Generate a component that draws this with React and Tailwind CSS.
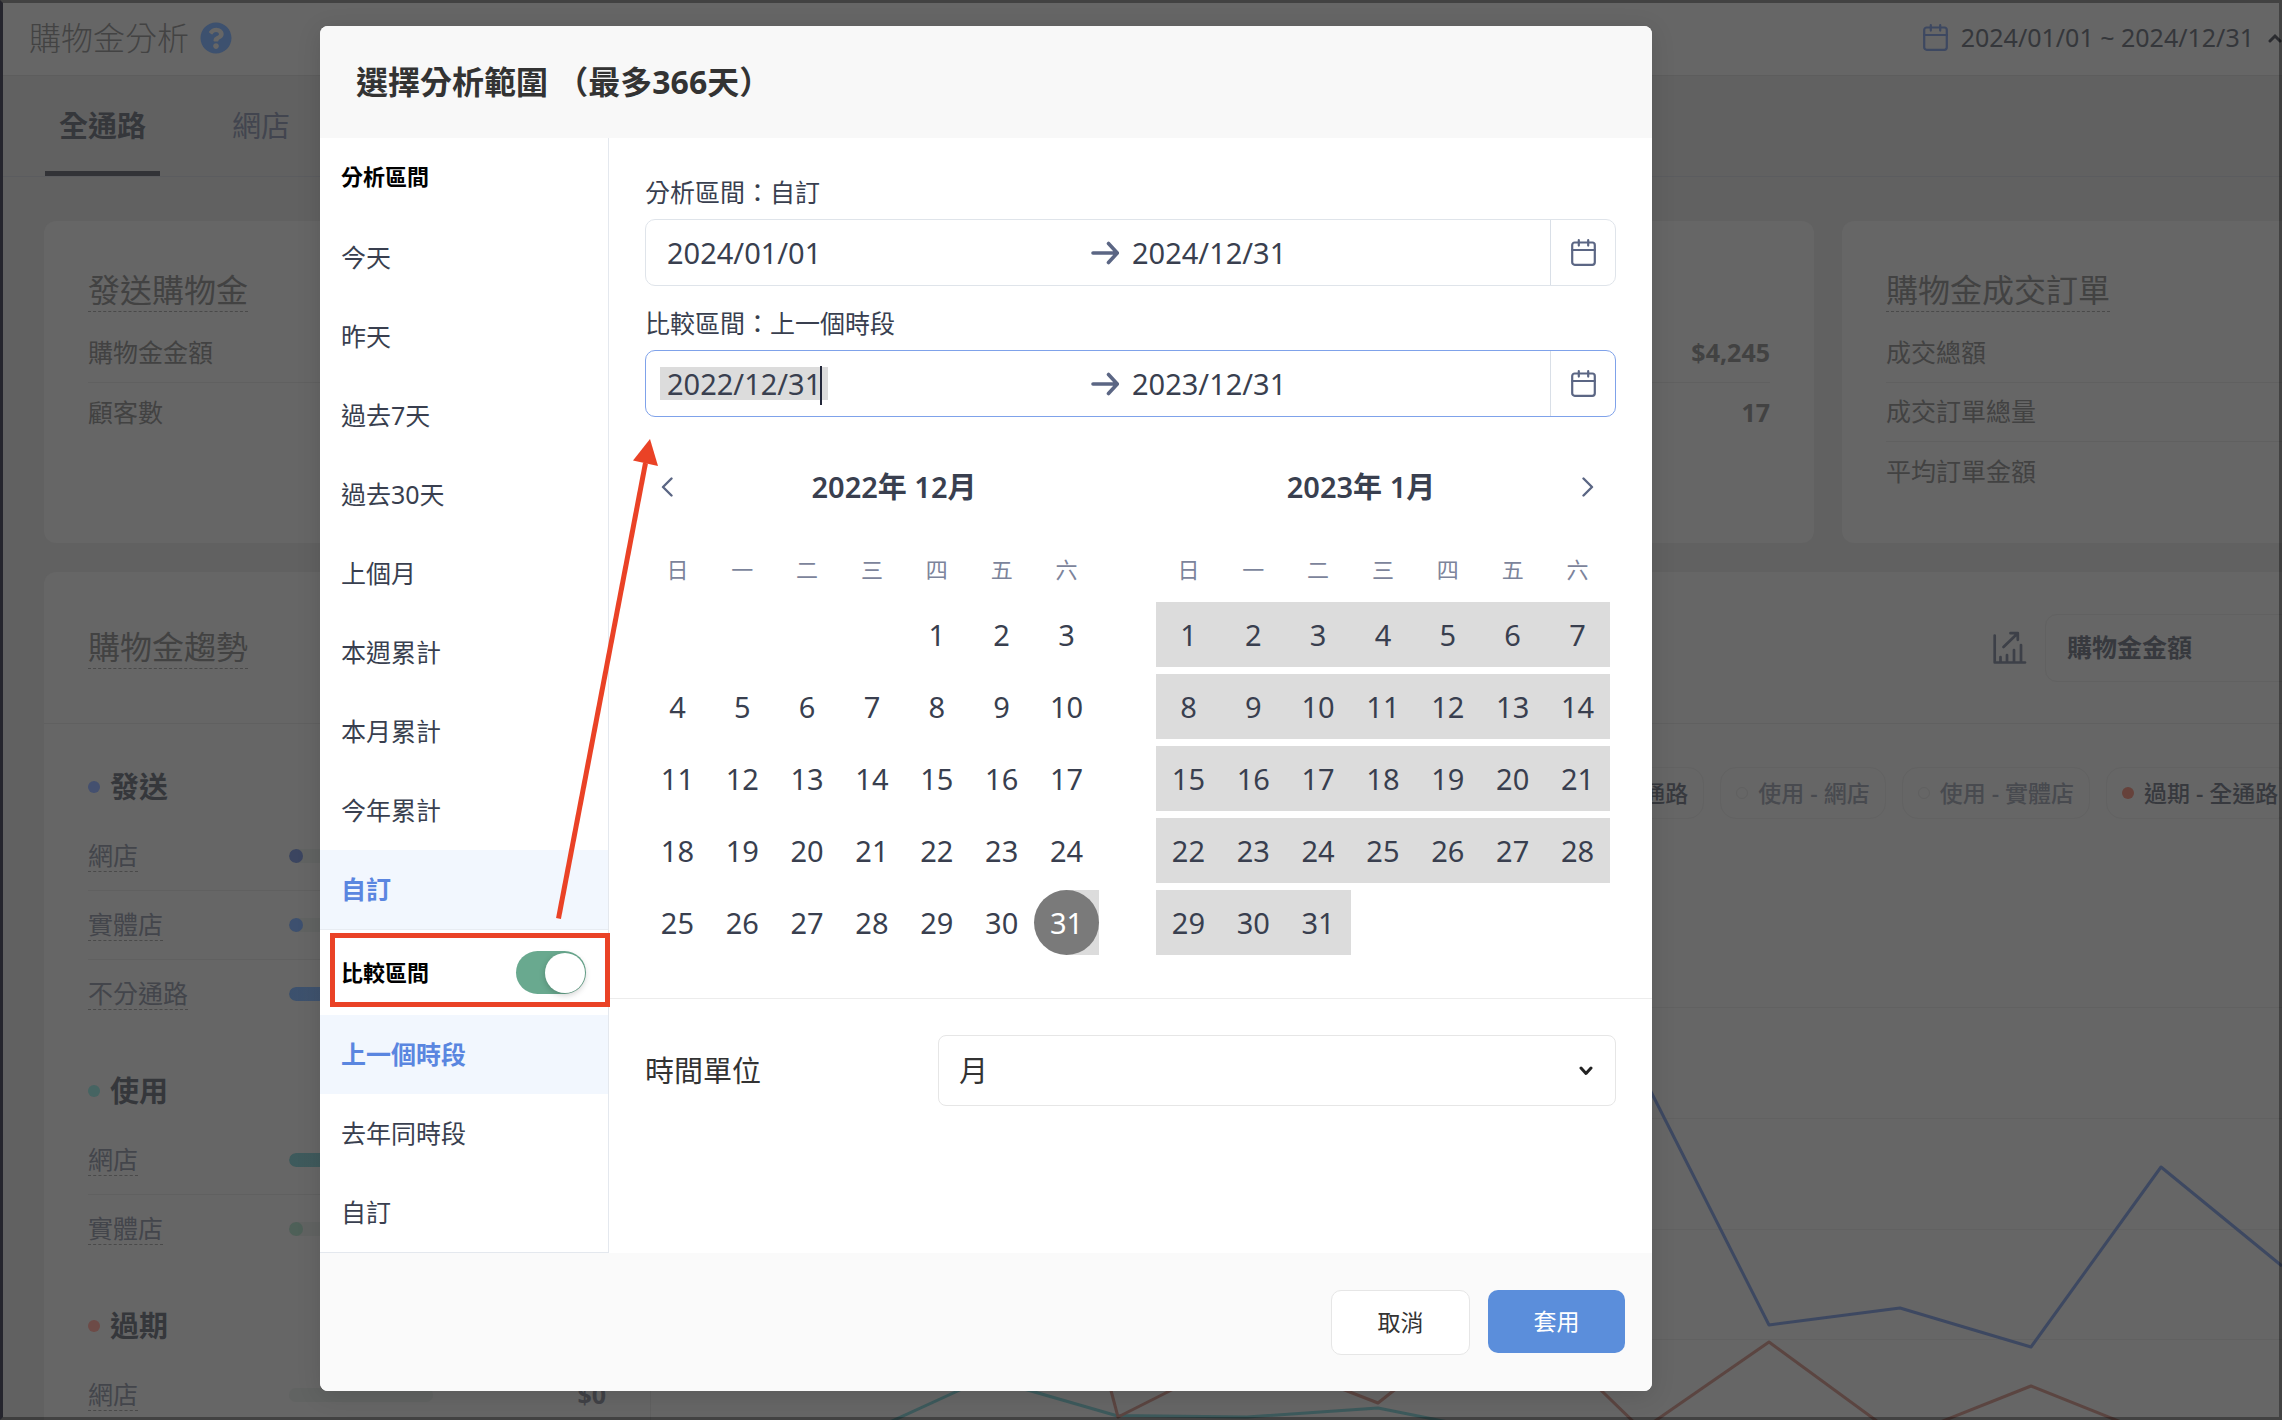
import React, { useState } from "react";
import { FaQuestionCircle } from "react-icons/fa";

const WEEKDAYS = ["日", "一", "二", "三", "四", "五", "六"];

function CalendarIcon({ className }) {
  return (
    <svg viewBox="0 0 25 27" fill="none" stroke="currentColor" strokeWidth="2.2" strokeLinecap="round" strokeLinejoin="round" className={className} aria-hidden="true">
      <rect x="1.200" y="3.500" width="22.600" height="22.300" rx="2.500" />
      <path d="M1.200 11h22.600M7.800 1.200v5.400M17.200 1.200v5.400" />
    </svg>
  );
}

function ArrowRight() {
  return (
    <svg viewBox="0 0 28 24" fill="none" stroke="#5b6684" strokeWidth="3.6" strokeLinecap="round" strokeLinejoin="round" className="h-6 w-7 shrink-0" aria-hidden="true">
      <path d="M2 12h24M17.5 2.5L26.3 12L17.5 21.5" />
    </svg>
  );
}

function TrendIcon() {
  return (
    <svg viewBox="0 0 34 34" fill="none" stroke="#3d4048" strokeWidth="2.7" strokeLinecap="round" strokeLinejoin="round" className="size-[34px] shrink-0" aria-hidden="true">
      <path d="M1.700 4.500V31.500H32M7.500 30.500V26M14 30.500V24M21 30.500V19M28 30.500V14" />
      <path d="M10.500 16L24.500 2.500M17.500 2.200H24.800V8.800" />
    </svg>
  );
}

/* ---------- dashboard behind the dialog ---------- */

function StatCard({ title, rows }) {
  return (
    <section className="flex w-[871px] shrink-0 flex-col rounded-xl bg-[#666] px-11 pt-12 pb-[42px]">
      <h2 className="self-start border-b border-dashed border-[#4a4a4a] text-[32px] leading-[42px] text-[#424242]">{title}</h2>
      <dl className="mt-3">
        {rows.map(([label, value], i) => (
          <div key={label} className={"flex h-[59px] items-center justify-between text-[25px] text-[#424242] " + (i < rows.length - 1 ? "border-b border-[#606060]" : "")}>
            <dt>{label}</dt>
            <dd className="font-bold">{value}</dd>
          </div>
        ))}
      </dl>
    </section>
  );
}

function Group({ name, dot, rows }) {
  return (
    <section>
      <h3 className="flex h-[98px] items-center gap-[10px] pt-7 text-[29px] font-bold text-[#35373b]">
        <span className={"size-3 rounded-full " + dot} />
        {name}
      </h3>
      <ul>
        {rows.map((r, i) => (
          <li key={r.name} className={"flex items-center text-[25px] " + (i < rows.length - 1 ? "h-[69px] border-b border-[#606060]" : "h-[68px]")}>
            <span className="w-[201px]">
              <span className="inline-block border-b border-dashed border-[#4a4a4a] leading-[32px] text-[#43454b]">{r.name}</span>
            </span>
            <span className="flex h-[14px] w-[144px] overflow-hidden rounded-full bg-[#616362]">
              <span className={"rounded-full " + r.bar} />
            </span>
            <span className="ml-auto font-bold text-[#414247]">{r.value}</span>
          </li>
        ))}
      </ul>
    </section>
  );
}

function Pill({ label, dot, muted }) {
  return (
    <span className={"flex h-[52px] shrink-0 items-center gap-[10px] rounded-2xl border border-[#626262] px-[15px] text-[23px] font-medium " + (muted ? "text-[#484a4f]" : "text-[#37393e]")}>
      <span className={"size-3 rounded-full " + dot} />
      {label}
    </span>
  );
}

function Chart() {
  return (
    <svg viewBox="651 819 1631 601" className="block h-[601px] w-[1631px] shrink-0" fill="none" strokeWidth="3" strokeLinejoin="round" aria-hidden="true">
      <g stroke="#616161" strokeWidth="1">
        <path d="M695 1007.500H2282M695 1118.500H2282M695 1229.500H2282M695 1339.500H2282" />
      </g>
      <polyline stroke="#3d5a5c" points="855,1438 986,1378 1116,1415.500 1247,1417 1378,1408 1508,1434" />
      <polyline stroke="#5b4541" points="1095,1330 1118,1417 1247,1352 1378,1403 1508,1300 1642,1430 1769,1342 1900,1438 2031,1386 2161,1438" />
      <polyline stroke="#3d4861" points="1639,1068 1769,1325 1900,1308 2031,1347 2161,1167 2282,1266" />
    </svg>
  );
}

function Dashboard() {
  return (
    <div className="flex h-full flex-col bg-[#616161]">
      <header className="flex h-[76px] shrink-0 items-center border-b border-[#5d5d5d] bg-[#666] pl-[29px]">
        <h1 className="text-[32px] font-light text-[#434343]">購物金分析</h1>
        <FaQuestionCircle className="ml-[11px] size-8 text-[#3d516f]" />
        <button type="button" className="ml-auto flex shrink-0 items-center text-[25px] text-[#35373b]">
          <CalendarIcon className="mr-[13px] h-[27px] w-[25px] text-[#3d4861]" />
          2024/01/01 ~ 2024/12/31
          <svg viewBox="0 0 14 10" className="ml-[14px] h-[10px] w-[14px]" fill="none" stroke="#2b2c30" strokeWidth="3" strokeLinecap="round" aria-hidden="true">
            <path d="M2 8L7 3L12 8" />
          </svg>
        </button>
      </header>
      <nav className="flex h-[101px] shrink-0 gap-[58px] border-b border-[#5b5c5f] pl-[45px] text-[29px]">
        <a href="#all" className="flex items-center border-b-[5px] border-[#323337] px-[14px] pt-[5px] font-bold text-[#35373b]">全通路</a>
        <a href="#shop" className="flex items-center border-b-[5px] border-transparent px-[14px] pt-[5px] text-[#42454f]">網店</a>
      </nav>
      <main className="flex min-h-0 flex-1 flex-col gap-[29px] overflow-hidden pt-11 pl-11">
        <div className="flex gap-7">
          <StatCard title="發送購物金" rows={[["購物金金額", ""], ["顧客數", ""]]} />
          <StatCard title="使用購物金" rows={[["購物金金額", "$4,245"], ["顧客數", "17"]]} />
          <StatCard title="購物金成交訂單" rows={[["成交總額", ""], ["成交訂單總量", ""], ["平均訂單金額", ""]]} />
        </div>
        <section className="flex w-[2668px] flex-1 flex-col rounded-tl-xl bg-[#666]">
          <div className="flex h-[152px] shrink-0 items-center border-b border-[#606060] pl-11">
            <h2 className="border-b border-dashed border-[#4a4a4a] text-[32px] leading-[42px] text-[#424242]">購物金趨勢</h2>
            <div className="ml-[1745px] flex items-center gap-[18px]">
              <TrendIcon />
              <button type="button" className="h-[68px] w-[300px] rounded-xl border border-[#616161] pl-[21px] text-left text-[25px] font-bold text-[#37393e]">購物金金額</button>
            </div>
          </div>
          <div className="flex">
            <div className="w-[607px] shrink-0 border-r border-[#606060] px-11">
              <Group
                name="發送"
                dot="bg-[#44506f]"
                rows={[
                  { name: "網店", bar: "w-[14px] bg-[#3b4560]" },
                  { name: "實體店", bar: "w-[14px] bg-[#3d506f]" },
                  { name: "不分通路", bar: "w-[120px] bg-linear-to-r from-[#3b506d] to-[#4c5a6e]" },
                ]}
              />
              <Group
                name="使用"
                dot="bg-[#466462]"
                rows={[
                  { name: "網店", bar: "w-[120px] bg-linear-to-r from-[#3d5a5c] to-[#46585b]" },
                  { name: "實體店", bar: "w-[14px] bg-[#4e6058]" },
                ]}
              />
              <Group name="過期" dot="bg-[#6d4b47]" rows={[{ name: "網店", bar: "w-0", value: "$0" }]} />
            </div>
            <div className="min-w-0 flex-1">
              <div className="flex gap-4 pt-[43px] pl-[865px]">
                <Pill label="使用 - 全通路" dot="bg-[#466462]" />
                <Pill label="使用 - 網店" dot="border border-[#606060]" muted />
                <Pill label="使用 - 實體店" dot="border border-[#606060]" muted />
                <Pill label="過期 - 全通路" dot="bg-[#66423b]" />
              </div>
              <Chart />
            </div>
          </div>
        </section>
      </main>
    </div>
  );
}

/* ---------- dialog ---------- */

function NavItem({ label, selected, onClick }) {
  return (
    <button
      type="button"
      aria-pressed={selected}
      onClick={onClick}
      className={"block h-[79px] w-full px-[21px] pt-px text-left text-[25px] " + (selected ? "bg-[#f2f7fe] font-bold text-[#5a86e0]" : "text-[#393f4f]")}
    >
      {label}
    </button>
  );
}

function RangeField({ id, label, start, end, active }) {
  return (
    <div>
      <label htmlFor={id} className="block text-[25px] leading-[36px] text-[#393f4f]">{label}</label>
      <div className={"mt-[9px] flex h-[67px] items-center rounded-[10px] border " + (active ? "border-[#7fa2ea]" : "border-[#dfe4ea]")}>
        <div className="relative flex-1 pl-[14px]">
          <input id={id} defaultValue={start} className={"block h-[33px] w-[168px] px-[7px] text-[29px] leading-[33px] text-[#393f4f] outline-none " + (active ? "bg-[#dcdcdc]" : "")} />
          {active && <span className="absolute -top-px left-[174px] h-[39px] w-[2px] bg-[#23283a]" />}
        </div>
        <ArrowRight />
        <div className="flex-1">
          <input aria-label={label} defaultValue={end} className="block h-[33px] w-full px-[13px] text-[29px] leading-[33px] text-[#393f4f] outline-none" />
        </div>
        <button type="button" aria-label="開啟日曆" className="flex h-full w-[65px] items-center justify-center border-l border-[#d9dfe7] text-[#5b6684]">
          <CalendarIcon className="h-[27px] w-[25px]" />
        </button>
      </div>
    </div>
  );
}

function Month({ title, offset, range, selected, side }) {
  const nav = (
    <button type="button" aria-label={side === "left" ? "上個月份" : "下個月份"} className="flex h-11 w-11 shrink-0 items-center justify-center">
      <svg viewBox="0 0 12 20" className="h-5 w-3" fill="none" stroke="#5b6684" strokeWidth="2.4" strokeLinecap="round" strokeLinejoin="round" aria-hidden="true">
        <path d={side === "left" ? "M10.500 1.500L2 10L10.500 18.500" : "M1.500 1.500L10 10L1.500 18.500"} />
      </svg>
    </button>
  );
  const cells = [...Array(offset).fill(null), ...Array.from({ length: 31 }, (_, i) => i + 1)];
  while (cells.length % 7) cells.push(null);
  const weeks = [];
  for (let i = 0; i < cells.length; i += 7) weeks.push(cells.slice(i, i + 7));
  return (
    <div className="min-w-0 flex-1">
      <div className="flex items-center">
        {side === "left" && nav}
        <h3 className="flex-1 text-center text-[29px] leading-[44px] font-semibold text-[#393f4f]">{title}</h3>
        {side === "right" && nav}
      </div>
      <table className="mt-[38px] w-full table-fixed border-collapse">
        <thead>
          <tr>
            {WEEKDAYS.map((d) => (
              <th key={d} className="h-[48px] pb-1 text-[22px] leading-[44px] font-normal text-[#7c849b]">{d}</th>
            ))}
          </tr>
        </thead>
        <tbody>
          {weeks.map((w, wi) => (
            <tr key={wi}>
              {w.map((d, di) => (
                <td key={di} className="h-[72px] p-0 align-bottom">
                  {d && (
                    <button
                      type="button"
                      className={
                        "block h-[65px] w-full text-center text-[29px] " +
                        (d === selected
                          ? "bg-linear-to-r from-transparent from-50% to-[#dcdcdc] to-50% text-white"
                          : range
                            ? "bg-[#dcdcdc] text-[#393f4f]"
                            : "text-[#393f4f]")
                      }
                    >
                      {d === selected ? <span className="block h-full rounded-full bg-[#7a7a7a] leading-[66px]">{d}</span> : d}
                    </button>
                  )}
                </td>
              ))}
            </tr>
          ))}
        </tbody>
      </table>
    </div>
  );
}

function RangeDialog() {
  const [range, setRange] = useState(8);
  const [compare, setCompare] = useState(0);
  const [on, setOn] = useState(true);
  const ranges = ["今天", "昨天", "過去7天", "過去30天", "上個月", "本週累計", "本月累計", "今年累計", "自訂"];
  const compares = ["上一個時段", "去年同時段", "自訂"];
  return (
    <div role="dialog" aria-labelledby="range-title" className="relative w-[1332px] overflow-hidden rounded-lg bg-white shadow-[0_4px_24px_rgba(0,0,0,0.12)]">
      <header className="flex h-28 items-center bg-[#f8f8f8] px-9">
        <h2 id="range-title" className="text-[32px] font-bold text-[#333]">選擇分析範圍 （最多366天）</h2>
      </header>
      <div className="flex">
        <aside className="w-[289px] shrink-0 border-r border-b border-[#e4e8ee]">
          <h3 className="flex h-20 items-center px-[21px] pb-[3px] text-[22px] font-bold text-black">分析區間</h3>
          {ranges.map((r, i) => (
            <NavItem key={r} label={r} selected={i === range} onClick={() => setRange(i)} />
          ))}
          <div className="flex h-[86px] items-center justify-between border-t border-[#e8ecf2] pr-[22px] pl-[21px]">
            <label htmlFor="compare-switch" className="text-[22px] font-bold text-black">比較區間</label>
            <input
              id="compare-switch"
              type="checkbox"
              role="switch"
              checked={on}
              onChange={(e) => setOn(e.target.checked)}
              className="flex h-[43px] w-[70px] appearance-none items-center rounded-full bg-[#b9bec8] p-px before:size-10 before:rounded-full before:bg-white before:shadow-[0_2px_6px_rgba(0,0,0,0.2)] checked:justify-end checked:bg-[#69a98f]"
            />
          </div>
          {compares.map((r, i) => (
            <NavItem key={r} label={r} selected={i === compare} onClick={() => setCompare(i)} />
          ))}
        </aside>
        <div className="min-w-0 flex-1">
          <div className="border-b border-[#ececec] px-9 pt-9 pb-[43px]">
            <RangeField id="range-start" label="分析區間：自訂" start="2024/01/01" end="2024/12/31" />
            <div className="mt-[19px]">
              <RangeField id="compare-start" label="比較區間：上一個時段" start="2022/12/31" end="2023/12/31" active />
            </div>
            <div className="mt-12 flex gap-[57px] pr-[6px]">
              <Month title="2022年 12月" offset={4} selected={31} side="left" />
              <Month title="2023年 1月" offset={0} range side="right" />
            </div>
          </div>
          <div className="flex items-center px-9 pt-9">
            <label htmlFor="unit" className="w-[293px] text-[29px] text-[#333]">時間單位</label>
            <div className="relative flex-1">
              <select id="unit" className="block h-[71px] w-full appearance-none rounded-lg border border-[#e6e6e6] bg-white px-5 text-[29px] text-[#333]">
                <option>月</option>
              </select>
              <svg viewBox="0 0 14 10" className="pointer-events-none absolute top-[31px] right-[23px] h-[10px] w-[14px]" fill="none" stroke="#222" strokeWidth="3" strokeLinecap="round" strokeLinejoin="round" aria-hidden="true">
                <path d="M2 2L7 7.500L12 2" />
              </svg>
            </div>
          </div>
        </div>
      </div>
      <footer className="flex h-[138px] items-start justify-end gap-[18px] bg-[#fafafa] pt-[37px] pr-[27px] text-[23px]">
        <button type="button" className="h-[65px] w-[139px] rounded-[10px] border border-[#e6e6e6] bg-white text-[#333]">取消</button>
        <button type="button" className="h-[63px] w-[137px] rounded-[10px] bg-[#5b8edb] text-white">套用</button>
      </footer>

      {/* annotation: frame round the switch, arrow to the compare field */}
      <svg viewBox="0 0 360 1000" className="pointer-events-none absolute top-0 left-0 h-[1000px] w-[360px]" aria-hidden="true">
        <rect x="12.500" y="909.500" width="275" height="69" fill="none" stroke="#ea4226" strokeWidth="5" />
        <path d="M238.500 892.500L325.500 437" stroke="#ea4226" strokeWidth="5" />
        <path d="M330 413L313 434.500L338 440Z" fill="#ea4226" />
      </svg>
    </div>
  );
}

export default function App() {
  return (
    <div className="relative h-screen overflow-hidden font-['Noto_Sans','Noto_Sans_CJK_TC',sans-serif]">
      <Dashboard />
      <div className="absolute inset-0 flex items-start overflow-hidden pt-[26px] pl-[320px]">
        <RangeDialog />
      </div>
      <div className="pointer-events-none absolute inset-0 border-[3px] border-black/35 border-l-[#25252d]" />
    </div>
  );
}
